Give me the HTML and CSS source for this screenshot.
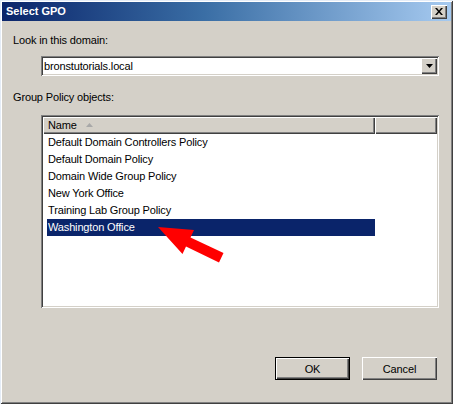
FILE: index.html
```html
<!DOCTYPE html>
<html>
<head>
<meta charset="utf-8">
<title>Select GPO</title>
<link rel="stylesheet" href="styles.css">
</head>
<body>
<div class="window">
  <div class="titlebar">
    <span class="title">Select GPO</span>
    <span class="close">
      <svg width="8" height="7" viewBox="0 0 8 7"><path d="M0 0h2l2 2.5L6 0h2L5 3.5 8 7H6L4 4.5 2 7H0l3-3.5z" fill="#000"/></svg>
    </span>
  </div>
  <div class="content">
    <div class="label">Look in this domain:</div>
    <div class="combo">
      <span class="combo-value">bronstutorials.local</span>
      <span class="drop">
        <svg width="7" height="4" viewBox="0 0 7 4"><path d="M0 0h7L3.5 4z" fill="#000"/></svg>
      </span>
    </div>
    <div class="label label-gap">Group Policy objects:</div>
    <div class="list">
      <div class="header">
        <div class="hcell hname">Name
          <svg class="sort" width="7" height="4" viewBox="0 0 7 4"><path d="M3.5 0L7 4H0z" fill="#a8a8a8"/></svg>
        </div>
        <div class="hcell hrest"></div>
      </div>
      <div class="rows">
        <div class="row">Default Domain Controllers Policy</div>
        <div class="row">Default Domain Policy</div>
        <div class="row">Domain Wide Group Policy</div>
        <div class="row">New York Office</div>
        <div class="row">Training Lab Group Policy</div>
        <div class="row selected">Washington Office</div>
      </div>
    </div>
    <div class="buttons">
      <button class="btn default">OK</button>
      <button class="btn">Cancel</button>
    </div>
  </div>
  <svg class="arrow" width="453" height="404" viewBox="0 0 453 404">
    <polygon points="158,227 194,230 190.5,237.5 223.5,253 219,262.5 186,246.5 182.5,254" fill="#f00"/>
  </svg>
</div>
</body>
</html>
```

FILE: styles.css
```css
body {
  margin: 0;
  font-family: "Liberation Sans", Arial, sans-serif;
  font-size: 11px;
  color: #000;
}

.window {
  position: relative;
  width: 453px;
  height: 404px;
  box-sizing: border-box;
  padding: 2px;
  background: #d4d0c8;
  display: flex;
  flex-direction: column;
  box-shadow: inset 1px 1px 0 #e4ecf7, inset -1px -1px 0 #404040, inset 2px 2px 0 #ffffff, inset -2px -2px 0 #808080;
}

.titlebar {
  height: 19px;
  flex: none;
  display: flex;
  align-items: center;
  padding: 0 4px;
  background: linear-gradient(to right, #0a246a 0%, #3a6ea5 45%, #a6caf0 100%);
  color: #fff;
  font-weight: bold;
}

.title {
  line-height: 13px;
}

.close {
  margin-left: auto;
  width: 16px;
  height: 14px;
  box-sizing: border-box;
  background: #d4d0c8;
  display: flex;
  align-items: center;
  justify-content: center;
  box-shadow: inset 1px 1px 0 #ffffff, inset -1px -1px 0 #404040, inset -2px -2px 0 #808080;
}

.content {
  flex: 1;
  display: flex;
  flex-direction: column;
  padding: 13px 12px 0 11px;
  letter-spacing: -0.15px;
}

.label {
  line-height: 13px;
}

.label-gap {
  margin-top: 15px;
}

.combo {
  margin: 9px 0 0 28px;
  height: 20px;
  box-sizing: border-box;
  background: #fff;
  display: flex;
  align-items: center;
  padding: 2px;
  box-shadow: inset 1px 1px 0 #808080, inset -1px -1px 0 #ffffff, inset 2px 2px 0 #404040, inset -2px -2px 0 #d4d0c8;
}

.combo-value {
  flex: 1;
  padding-left: 1px;
  line-height: 16px;
}

.drop {
  width: 16px;
  height: 16px;
  box-sizing: border-box;
  background: #d4d0c8;
  display: flex;
  align-items: center;
  justify-content: center;
  box-shadow: inset 1px 1px 0 #ffffff, inset -1px -1px 0 #404040, inset -2px -2px 0 #808080;
}

.list {
  margin: 11px 0 0 28px;
  height: 193px;
  box-sizing: border-box;
  padding: 2px;
  background: #fff;
  display: flex;
  flex-direction: column;
  box-shadow: inset 1px 1px 0 #808080, inset -1px -1px 0 #ffffff, inset 2px 2px 0 #404040, inset -2px -2px 0 #d4d0c8;
}

.header {
  height: 17px;
  display: flex;
  flex: none;
}

.hcell {
  height: 17px;
  box-sizing: border-box;
  background: #d4d0c8;
  box-shadow: inset 1px 1px 0 #ffffff, inset -1px -1px 0 #404040, inset -2px -2px 0 #808080;
  display: flex;
  align-items: center;
}

.hname {
  width: 332px;
  padding-left: 5px;
  line-height: 13px;
}

.sort {
  margin-left: 9px;
  margin-bottom: 1px;
}

.hrest {
  flex: 1;
}

.rows {
  padding-left: 4px;
}

.row {
  width: 328px;
  height: 17px;
  line-height: 17px;
  padding-left: 1px;
  box-sizing: border-box;
}

.row.selected {
  background: #0a246a;
  color: #fff;
}

.buttons {
  margin-top: 49px;
  padding-right: 2px;
  display: flex;
  justify-content: flex-end;
  gap: 12px;
}

.btn {
  width: 75px;
  height: 23px;
  margin: 0;
  padding: 0;
  border: none;
  background: #d4d0c8;
  font-family: "Liberation Sans", Arial, sans-serif;
  font-size: 11px;
  letter-spacing: -0.15px;
  color: #000;
  box-shadow: inset 1px 1px 0 #ffffff, inset -1px -1px 0 #404040, inset -2px -2px 0 #808080;
}

.btn.default {
  box-shadow: inset 0 0 0 1px #000000, inset 2px 2px 0 #ffffff, inset -2px -2px 0 #404040, inset -3px -3px 0 #808080;
}

.arrow {
  position: absolute;
  left: 0;
  top: 0;
  pointer-events: none;
}
```
